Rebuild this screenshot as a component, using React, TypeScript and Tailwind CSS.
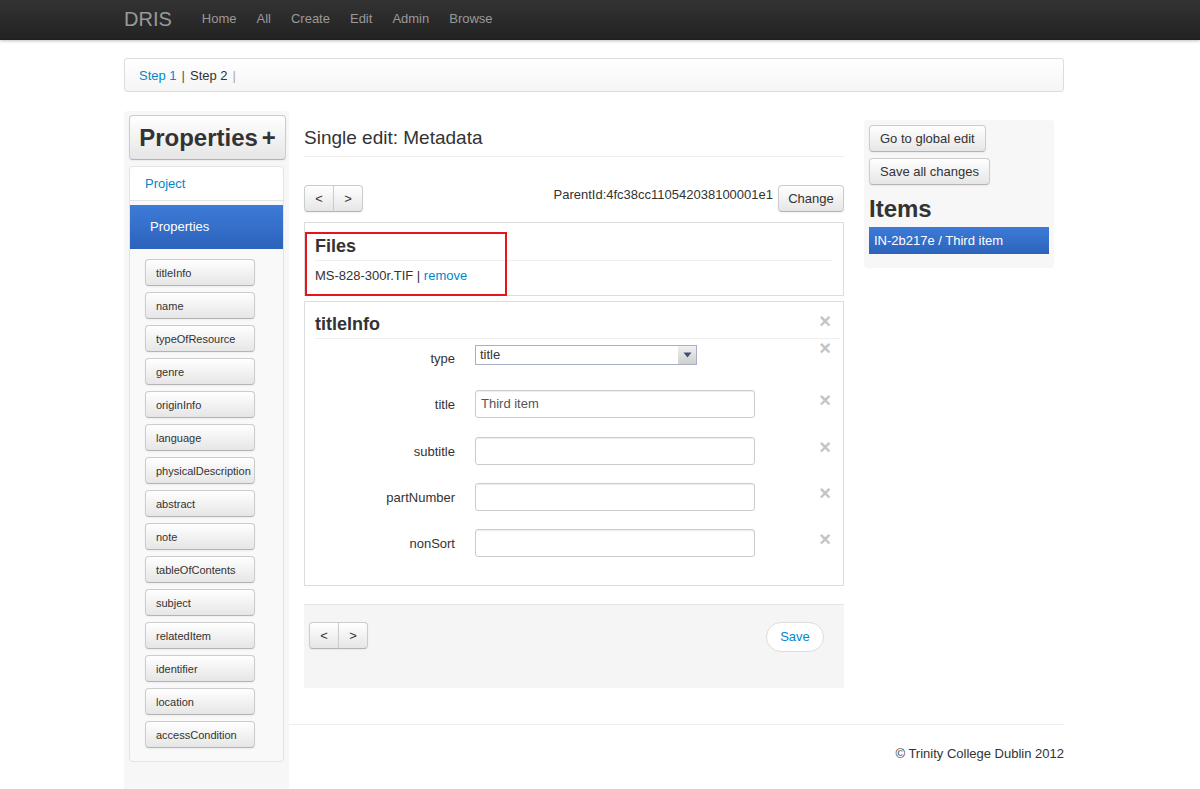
import React from 'react';

const btn =
  'bg-linear-to-b from-white to-[#e6e6e6] border border-[#cccccc] border-b-[#b3b3b3] rounded-[4px] shadow-[inset_0_1px_0_rgba(255,255,255,0.2),0_1px_2px_rgba(0,0,0,0.05)] text-[#333]';

const navLinks = ['Home', 'All', 'Create', 'Edit', 'Admin', 'Browse'];

const sections = [
  'titleInfo',
  'name',
  'typeOfResource',
  'genre',
  'originInfo',
  'language',
  'physicalDescription',
  'abstract',
  'note',
  'tableOfContents',
  'subject',
  'relatedItem',
  'identifier',
  'location',
  'accessCondition',
];

function Close({ className = '' }: { className?: string }) {
  return (
    <span className={`text-[20px] font-bold leading-[18px] text-[#c4c4c4] ${className}`}>×</span>
  );
}

function Pager({ className = '' }: { className?: string }) {
  return (
    <div className={`flex h-[27px] ${className}`}>
      <button className={`${btn} w-[30px] rounded-r-none text-[13px] leading-[18px]`}>&lt;</button>
      <button className={`${btn} -ml-px w-[30px] rounded-l-none text-[13px] leading-[18px]`}>&gt;</button>
    </div>
  );
}

function TextRow({ label, value, className = '' }: { label: string; value?: string; className?: string }) {
  return (
    <div className={`flex items-start ${className}`}>
      <label className="w-[140px] pt-[6px] text-right text-[13px] leading-[18px] text-[#333]">{label}</label>
      <div className="ml-[20px] flex h-[28px] w-[280px] items-center rounded-[3px] border border-[#cccccc] bg-white px-[5px] text-[13px] text-[#555] shadow-[inset_0_1px_1px_rgba(0,0,0,0.075)]">
        {value}
      </div>
      <Close className="ml-auto mr-[12px] mt-[1px]" />
    </div>
  );
}

export default function App() {
  return (
    <div className="min-h-screen bg-white font-['Liberation_Sans',Arial,sans-serif] text-[13px] leading-[18px] text-[#333]">
      {/* navbar */}
      <div className="h-[40px] bg-linear-to-b from-[#333333] to-[#222222] shadow-[0_1px_3px_rgba(0,0,0,0.25),inset_0_-1px_0_rgba(0,0,0,0.1)]">
        <div className="ml-[124px] flex h-[40px] w-[940px] items-center pb-[2px]">
          <span className="pr-[20px] text-[20px] leading-[20px] text-[#999]">DRIS</span>
          {navLinks.map((l) => (
            <span key={l} className="px-[10px] text-[13px] text-[#999]">
              {l}
            </span>
          ))}
        </div>
      </div>

      <div className="ml-[124px] w-[940px]">
        {/* breadcrumb */}
        <div className="mt-[18px] flex h-[34px] items-center rounded-[3px] border border-[#dddddd] bg-linear-to-b from-white to-[#f5f5f5] px-[14px] pt-[1px] shadow-[inset_0_1px_0_#fff]">
          <span className="text-[#0088cc]">Step 1</span>
          <span className="px-[5px] text-[#555]">|</span>
          <span className="text-[#333]">Step 2</span>
          <span className="px-[5px] text-[#aaa]">|</span>
        </div>

        <div className="mt-[19px] flex items-start">
          {/* left sidebar */}
          <div className="w-[165px] rounded-t-[4px] bg-[#f7f7f7] pb-[40px] pl-[5px] pr-[3px] pt-[4px]">
            <button className={`${btn} flex h-[45px] w-[157px] items-center justify-center text-[24px] font-bold leading-[27px]`}>
              Properties<span className="ml-[4px]">+</span>
            </button>
            <div className="mt-[6px] w-[155px] rounded-[4px] border border-[#e3e3e3] bg-[#f9f9f9] pb-[13px]">
              <div className="flex h-[34px] items-center rounded-t-[4px] border-b border-[#e3e3e3] bg-white pl-[15px] pt-[1px] text-[#0088cc]">
                Project
              </div>
              <div className="mt-[4px] flex h-[44px] items-center bg-linear-to-b from-[#3d7bd8] to-[#2c63bb] pl-[20px] text-white">
                Properties
              </div>
              <div className="flex flex-col gap-[6px] pl-[15px] pt-[10px]">
                {sections.map((s) => (
                  <button
                    key={s}
                    className={`${btn} flex h-[27px] w-[110px] items-center pl-[10px] text-[11px]`}
                  >
                    {s}
                  </button>
                ))}
              </div>
            </div>
          </div>

          {/* right area */}
          <div className="flex-1">
            <div className="flex items-start">
              {/* main */}
              <div className="ml-[15px] w-[540px] pt-[15px]">
                <h1 className="border-b border-[#eeeeee] pb-[6px] text-[19px] leading-[24px] text-[#333]">
                  Single edit: Metadata
                </h1>

                <div className="mt-[28px] flex items-start">
                  <Pager />
                  <span className="ml-auto mr-[5px] mt-[1px] text-[13px] leading-[18px]">ParentId:4fc38cc110542038100001e1</span>
                  <button className={`${btn} h-[27px] w-[66px] text-[13px]`}>Change</button>
                </div>

                {/* files */}
                <div className="relative mt-[10px] border border-[#dddddd] px-[10px] pb-[10px] pr-[11px] pt-[10px]">
                  <h3 className="border-b border-[#eeeeee] text-[18px] font-bold leading-[27px]">Files</h3>
                  <div className="mt-[6px]">
                    MS-828-300r.TIF | <span className="text-[#0088cc]">remove</span>
                  </div>
                  <div className="absolute bottom-[-1px] left-0 top-[9px] w-[202px] border-2 border-[#e8141c]" />
                </div>

                {/* titleInfo */}
                <div className="mt-[5px] border border-[#dddddd] pb-[28px] pt-[9px]">
                  <div className="ml-[10px] mr-[3px] flex items-start border-b border-[#eeeeee]">
                    <h3 className="text-[18px] font-bold leading-[27px]">titleInfo</h3>
                    <Close className="ml-auto mr-[9px] mt-[1px]" />
                  </div>
                  <div className="ml-[10px] mt-[6px] flex items-start">
                    <label className="w-[140px] pt-[5px] text-right text-[13px] leading-[18px]">type</label>
                    <div className="ml-[20px] flex h-[20px] w-[222px] items-center border border-[#a7b0c4] bg-white">
                      <span className="flex-1 pl-[4px] text-[13px] text-[#333]">title</span>
                      <div className="flex h-[18px] w-[18px] items-center justify-center bg-linear-to-b from-[#f0f0f0] to-[#cfcfcf]">
                        <svg width="9" height="6" viewBox="0 0 9 6">
                          <path d="M0.5 0.5 L8.5 0.5 L4.5 5.5 Z" fill="#3f5078" />
                        </svg>
                      </div>
                    </div>
                    <Close className="ml-auto mr-[12px] mt-[-6px]" />
                  </div>
                  <div className="ml-[10px]">
                    <TextRow label="title" value="Third item" className="mt-[22px]" />
                    <TextRow label="subtitle" className="mt-[19px]" />
                    <TextRow label="partNumber" className="mt-[18px]" />
                    <TextRow label="nonSort" className="mt-[18px]" />
                  </div>
                </div>

                {/* form actions */}
                <div className="mt-[18px] flex h-[84px] items-start border-t border-[#e5e5e5] bg-[#f5f5f5] pl-[5px] pr-[20px] pt-[17px]">
                  <Pager />
                  <button className="ml-auto h-[30px] w-[58px] rounded-full border border-[#dddddd] bg-white text-[13px] text-[#0088cc]">
                    Save
                  </button>
                </div>
              </div>

              {/* right well */}
              <div className="ml-[20px] mt-[9px] w-[190px] rounded-[4px] bg-[#f7f7f7] p-[5px] pb-[14px]">
                <button className={`${btn} h-[27px] px-[10px] pt-[1px] text-[13px]`}>Go to global edit</button>
                <button className={`${btn} mt-[6px] block h-[27px] px-[10px] pt-[1px] text-[13px]`}>Save all changes</button>
                <h2 className="mt-[10px] text-[24px] font-bold leading-[27px]">Items</h2>
                <div className="mt-[5px] flex h-[27px] w-[180px] items-center bg-linear-to-b from-[#3d7bd8] to-[#2c63bb] pl-[5px] pt-[1px] text-white">
                  IN-2b217e / Third item
                </div>
              </div>
            </div>

            {/* footer */}
            <div className="mt-[36px] border-t border-[#eeeeee] pt-[20px] text-right">
              © Trinity College Dublin 2012
            </div>
          </div>
        </div>
      </div>
    </div>
  );
}
